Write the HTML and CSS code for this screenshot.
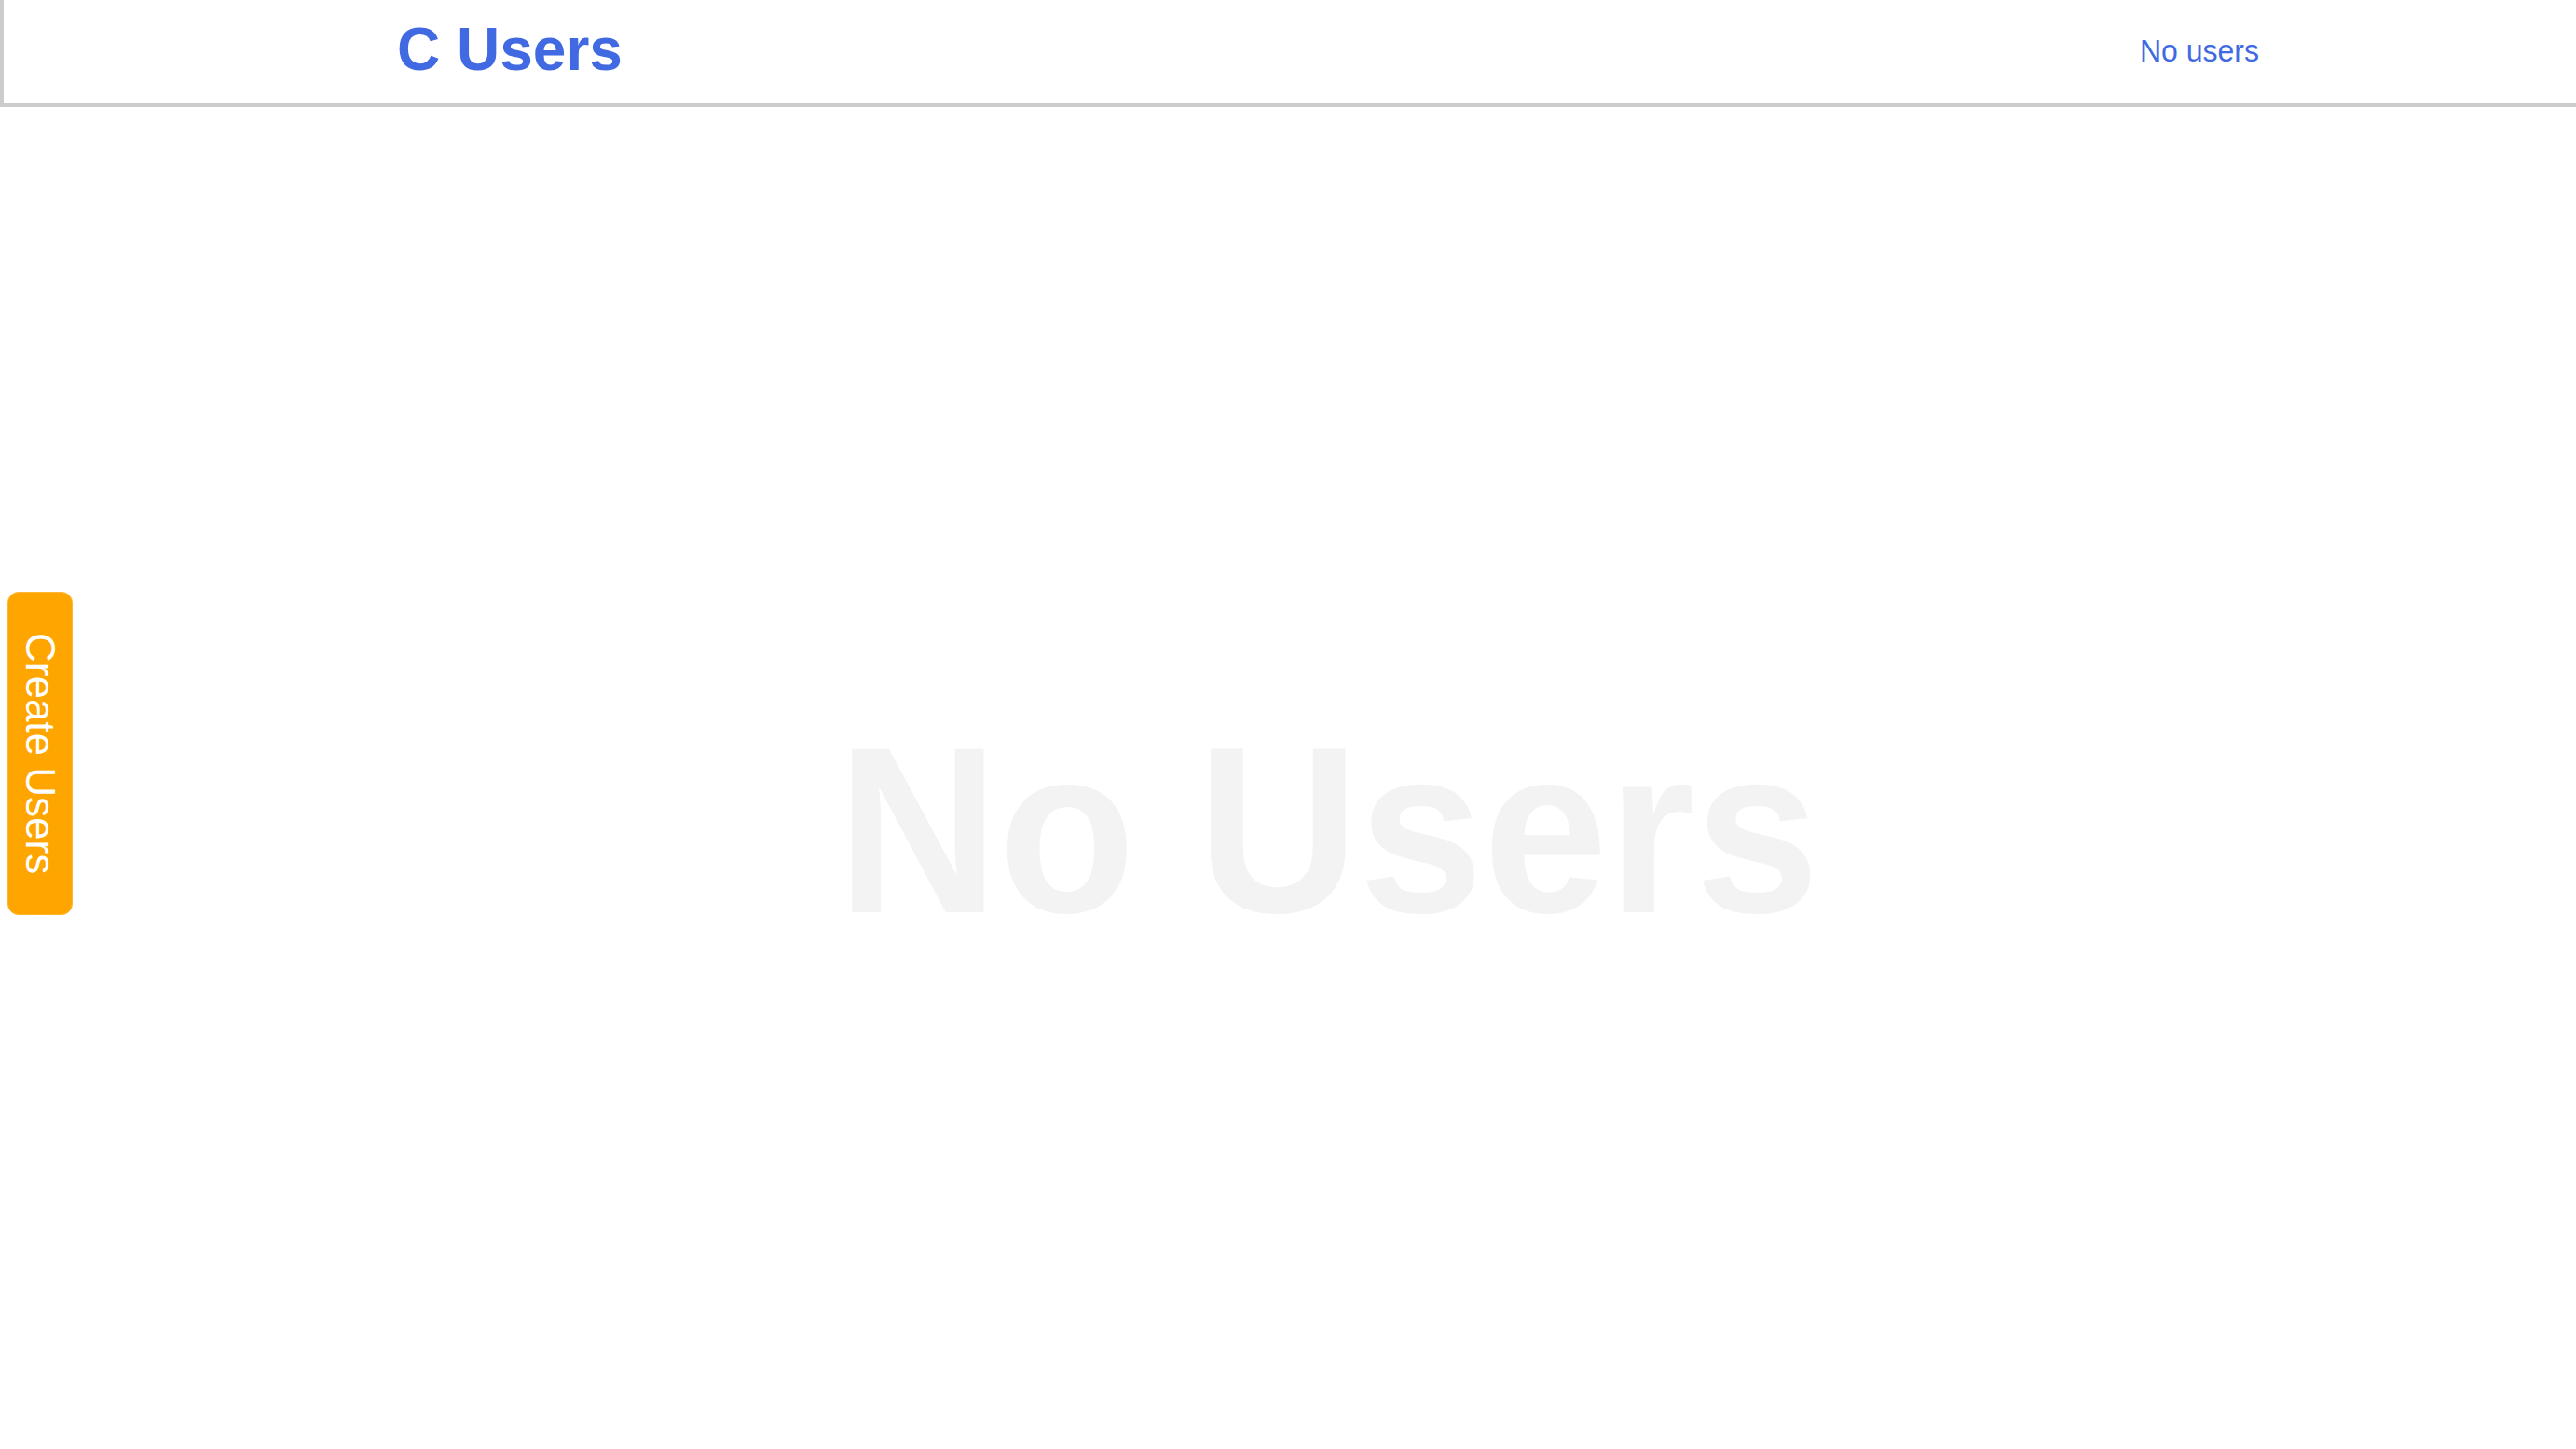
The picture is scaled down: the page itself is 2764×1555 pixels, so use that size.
FILE: index.html
```html
<!DOCTYPE html>
<html lang="en">
<head>
<meta charset="utf-8">
<title>C Users</title>
<link rel="stylesheet" href="styles.css">
</head>
<body>
<header class="topbar">
  <h1 class="brand">C Users</h1>
  <a class="count-link" href="#">No users</a>
</header>
<main class="content">
  <div class="empty-state">No Users</div>
</main>
<button class="create-btn" type="button">Create Users</button>
</body>
</html>
```

FILE: styles.css
```css
html, body {
  margin: 0;
  padding: 0;
  background: #ffffff;
  font-family: "Liberation Sans", Arial, Helvetica, sans-serif;
}

.topbar {
  display: flex;
  align-items: center;
  justify-content: space-between;
  height: 111px;
  box-sizing: content-box;
  border-left: 4px solid #cccccc;
  border-bottom: 4px solid #cccccc;
  padding: 0 340px 0 422px;
}

.brand {
  margin: 0 0 6px 0;
  font-size: 64px;
  font-weight: 700;
  color: #4169e1;
  line-height: 1;
}

.count-link {
  color: #4169e1;
  font-size: 32px;
  text-decoration: none;
  margin-bottom: 2px;
  transform: scaleY(1.06);
}

.content {
  display: flex;
  justify-content: center;
  padding: 656px 0 0 86px;
}

.empty-state {
  font-size: 240px;
  font-weight: 700;
  color: #f3f3f3;
  line-height: 1;
  transform: scaleY(1.06);
}

.create-btn {
  position: fixed;
  left: 8px;
  top: 635px;
  width: 70px;
  height: 347px;
  padding: 0;
  border: 1px solid #ffb733;
  border-radius: 12px;
  background: #ffa500;
  color: #ffffff;
  font-family: "Liberation Sans", Arial, Helvetica, sans-serif;
  font-size: 44px;
  writing-mode: vertical-rl;
  display: flex;
  align-items: center;
  justify-content: center;
  cursor: pointer;
}
```
